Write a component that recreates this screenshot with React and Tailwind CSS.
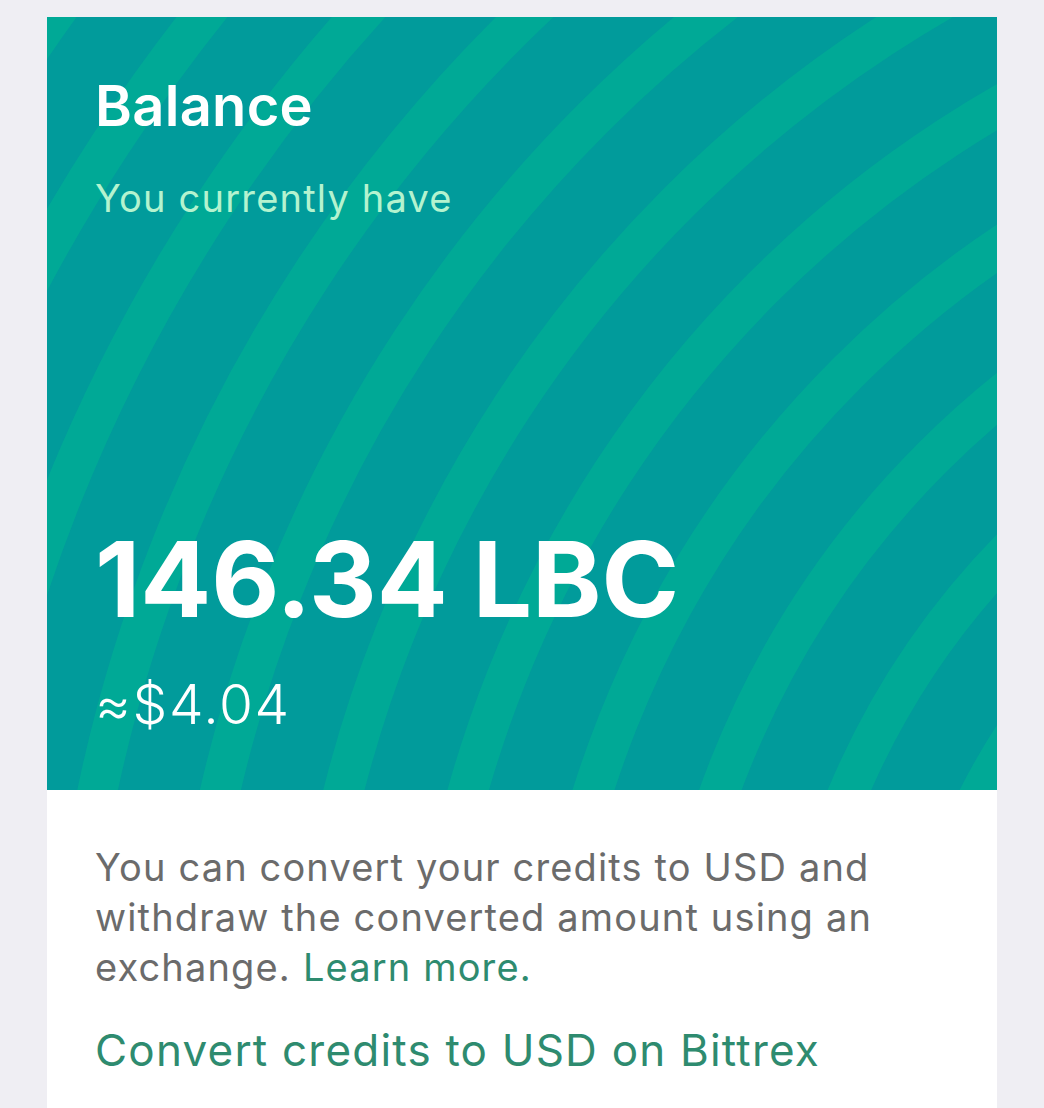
// App.jsx

import React from "react";

const RADII = [433, 553, 673, 793, 913, 1033, 1153, 1273, 1393, 1513, 1633, 1753, 1873, 1993];

/* Wavy stripes behind the balance */
function Waves() {
  return (
    <svg
      className="absolute inset-0 h-full w-full"
      viewBox="0 0 950 773"
      preserveAspectRatio="none"
    >
      {RADII.map((r) => (
        <circle
          key={r}
          cx="1531"
          cy="1086"
          r={r}
          fill="none"
          stroke="#00a996"
          strokeWidth="40"
        />
      ))}
    </svg>
  );
}

export default function App() {
  return (
    <div
      className="min-h-screen bg-[#efeef3] px-[47px] pt-[17px]"
      style={{ fontFamily: "Inter, 'Noto Sans', sans-serif" }}
    >
      <div className="bg-white min-h-[1091px]">
        {/* Balance card */}
        <div className="relative h-[773px] overflow-hidden bg-[#019b9b]">
          <Waves />

          <div className="relative flex flex-col pl-[48px] pt-[61px]">
            <h1 className="text-[56px] leading-none font-semibold text-white tracking-[0.3px]">
              Balance
            </h1>

            <p className="mt-[45px] text-[38px] leading-none text-[#b4f3cf] tracking-[1.2px]">
              You currently have
            </p>

            <p className="mt-[309px] text-[105px] leading-none font-bold text-white">
              146.34 LBC
            </p>

            <p className="mt-[46px] text-[55px] leading-none font-light text-white tracking-[1.6px]">
              ≈$4.04
            </p>
          </div>
        </div>

        {/* Info */}
        <div className="px-[48px] pt-[52px] text-[38px] leading-[50px] tracking-[1.15px]">
          <div className="text-[#6b6b6b]">
            You can convert your credits to USD and
          </div>
          <div className="text-[#6b6b6b]">
            withdraw the converted amount using an
          </div>
          <div className="flex gap-[12px]">
            <span className="text-[#6b6b6b]">exchange.</span>
            <a href="#" className="text-[#2e8b6f]">
              Learn more.
            </a>
          </div>

          <a
            href="#"
            className="block mt-[36px] text-[44px] leading-none text-[#2e8b6f] tracking-[1.2px]"
          >
            Convert credits to USD on Bittrex
          </a>
        </div>
      </div>
    </div>
  );
}
